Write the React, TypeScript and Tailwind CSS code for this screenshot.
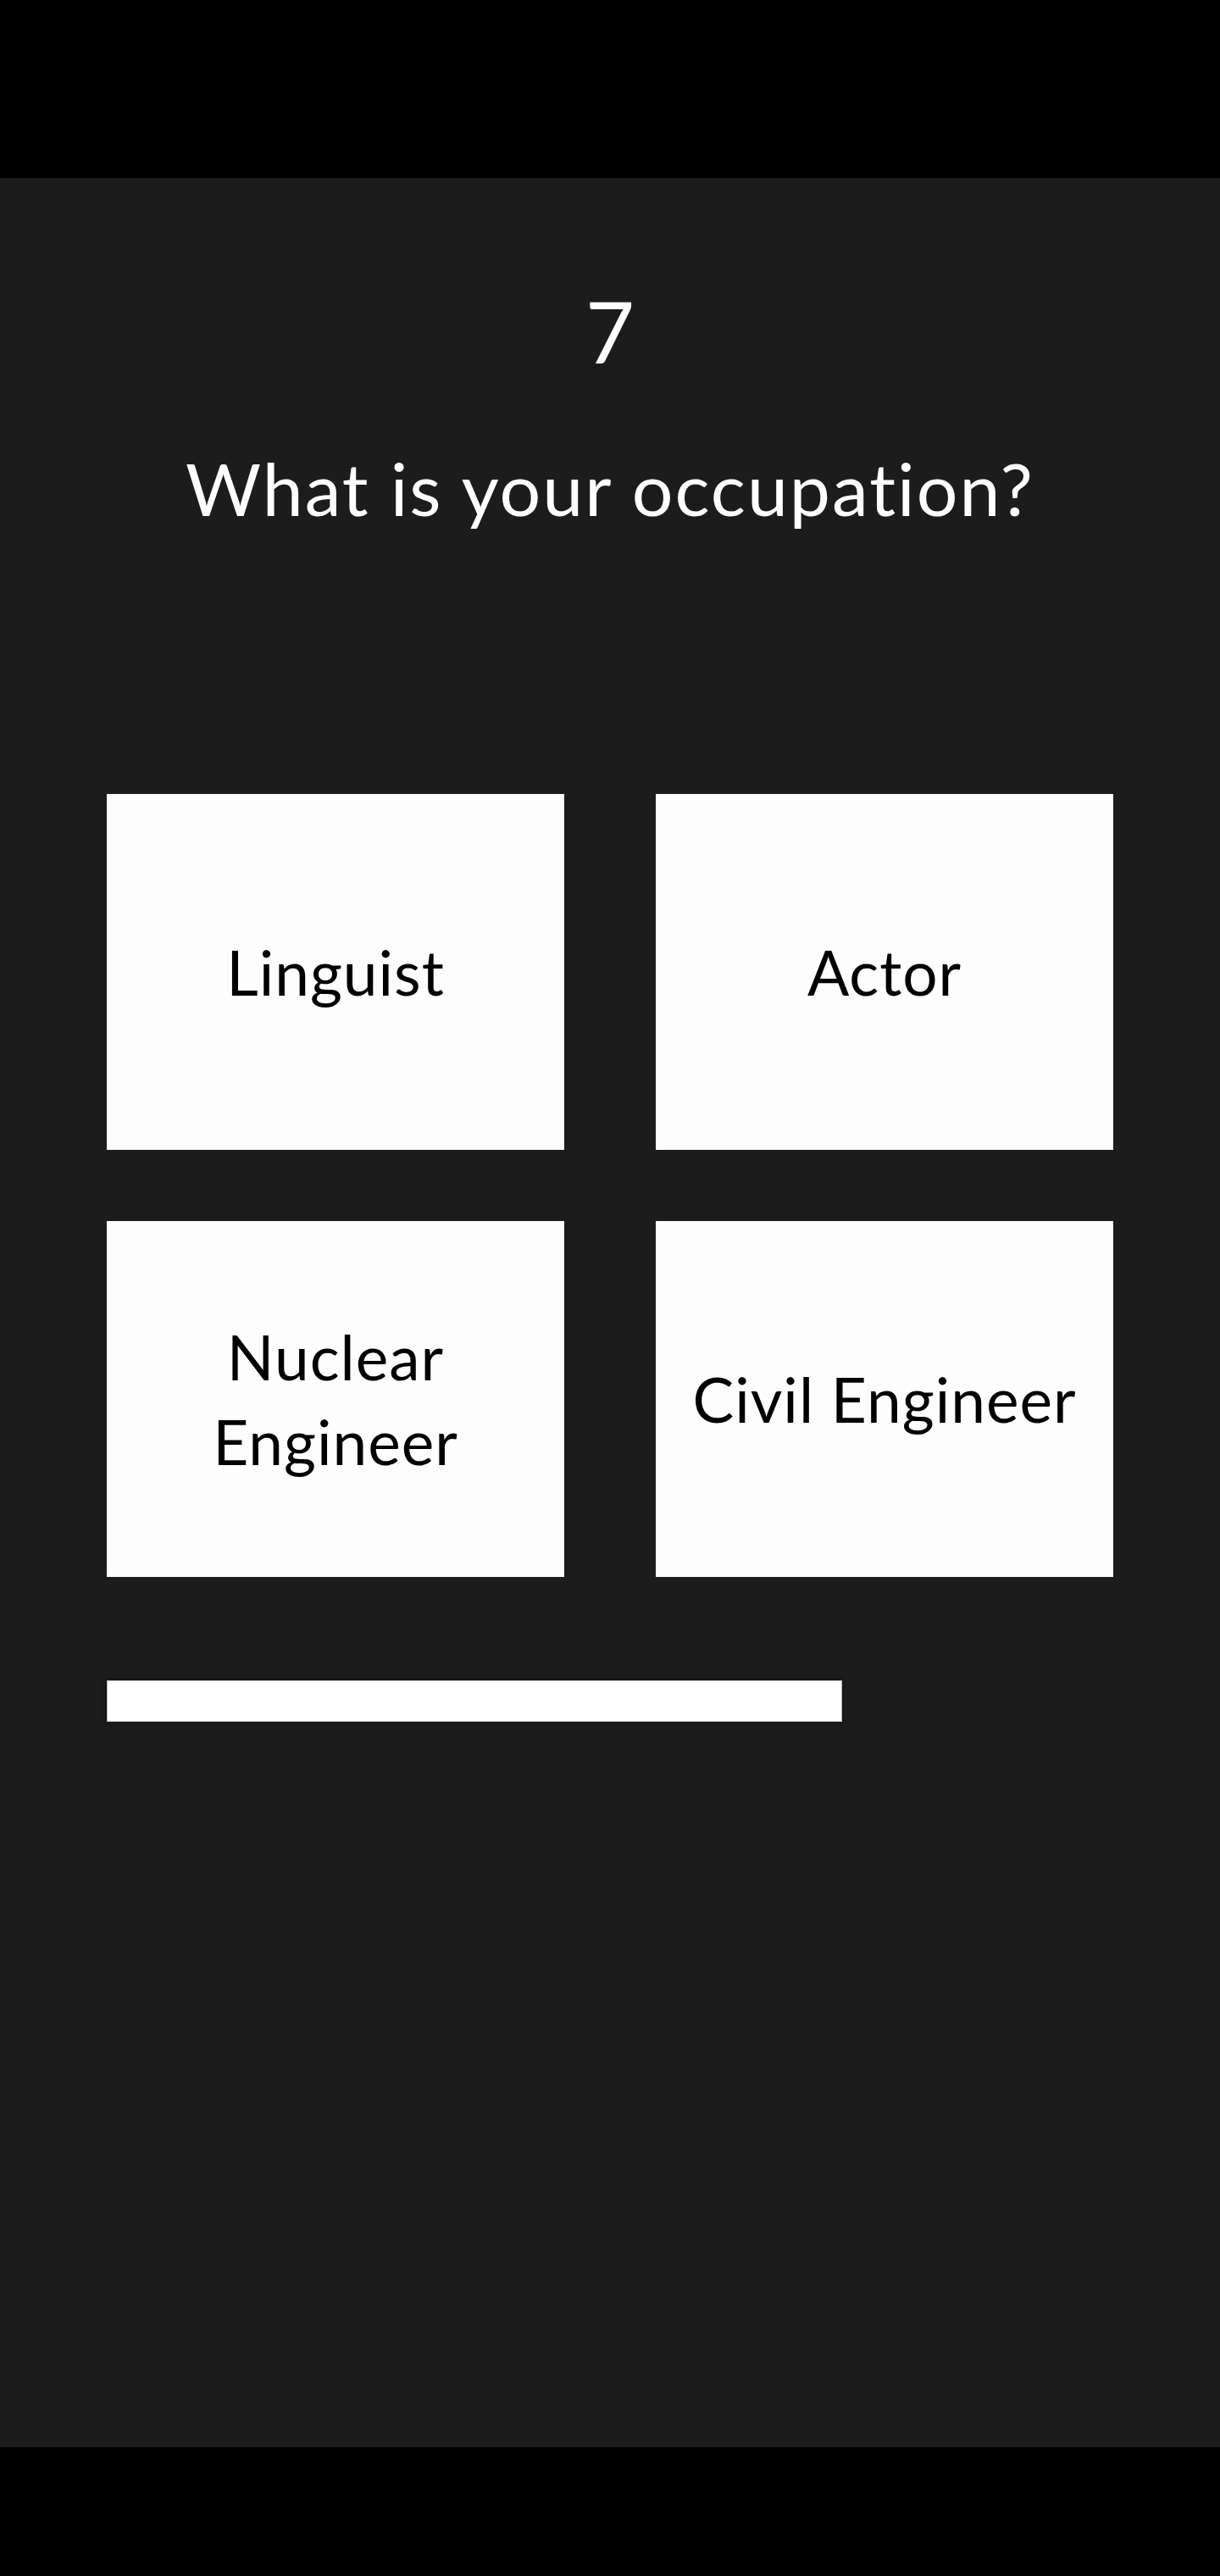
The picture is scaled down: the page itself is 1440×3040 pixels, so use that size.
const options = ['Linguist', 'Actor', 'Nuclear Engineer', 'Civil Engineer'];

const progress = 73;

export default function App() {
  return (
    <div className="flex h-[3040px] w-[1440px] flex-col bg-black font-['Lato',sans-serif] [font-variant-ligatures:none]">
      {/* status bar area */}
      <div className="h-[210px] shrink-0 bg-black" />

      <main className="flex h-[2678px] shrink-0 flex-col bg-[#1c1c1c] px-[126px] pt-[120px]">
        <div className="text-center text-[100px] leading-[120px] text-white">7</div>
        <h1 className="mt-[75px] text-center text-[86px] font-normal leading-[102px] tracking-[2px] text-white">
          What is your occupation?
        </h1>

        <div className="mt-[310px] grid grid-cols-2 gap-x-[108px] gap-y-[84px]">
          {options.map((opt) => (
            <button
              key={opt}
              className="flex h-[420px] items-center justify-center bg-[#fdfdfd] px-10 text-center text-[73px] leading-[100px] tracking-[1px] text-black"
            >
              {opt}
            </button>
          ))}
        </div>

        <div className="mt-[122px] h-[49px]">
          <div
            className="h-full border border-[#bcbcbc] bg-white shadow-[0_0_6px_rgba(0,0,0,0.5)]"
            style={{ width: `${(868 / 1188) * 100}%` }}
            data-progress={progress}
          />
        </div>
      </main>

      {/* nav bar area */}
      <div className="flex-1 bg-black" />
    </div>
  );
}
